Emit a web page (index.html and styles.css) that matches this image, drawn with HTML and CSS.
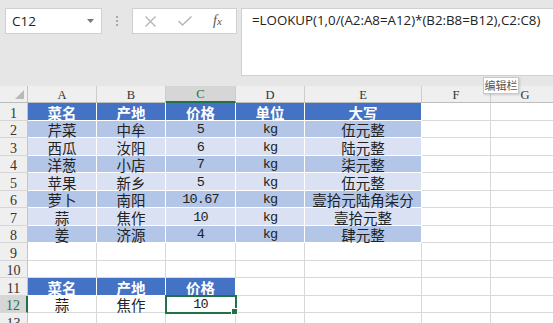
FILE: index.html
```html
<!DOCTYPE html>
<html lang="zh-CN">
<head>
<meta charset="UTF-8" />
<title>LOOKUP</title>
<link rel="stylesheet" href="styles.css">
</head>
<body>
  <div class="toolbar">
    <div class="namebox">
      <span>C12</span>
      <svg class="caret" width="7" height="4" viewBox="0 0 7 4"><path d="M0 0h7L3.5 4z" fill="#777"/></svg>
    </div>
    <div class="grip"><i></i><i></i><i></i></div>
    <div class="fnbox">
      <svg width="11" height="11" viewBox="0 0 11 11"><path d="M0.5 0.5l10 10M10.5 0.5l-10 10" stroke="#b4b4b4" stroke-width="1.3" fill="none"/></svg>
      <svg width="14" height="10" viewBox="0 0 14 10"><path d="M0.5 5l4 4L13.5 0.5" stroke="#b4b4b4" stroke-width="1.4" fill="none"/></svg>
      <span class="fx">f<small>x</small></span>
    </div>
    <div class="formula">=LOOKUP(1,0/(A2:A8=A12)*(B2:B8=B12),C2:C8)</div>
  </div>

  <div class="sheet">
    <div class="row cols">
      <div class="corner"><svg width="9" height="9" viewBox="0 0 9 9"><path d="M9 0v9H0z" fill="#b9b9b9"/></svg></div>
      <div>A</div><div>B</div><div class="on">C</div><div>D</div><div>E</div><div>F</div><div>G</div>
    </div>
    <div class="row">
      <div class="rh">1</div>
      <div class="t h">菜名</div><div class="t h">产地</div><div class="t h">价格</div><div class="t h">单位</div><div class="t h">大写</div><div></div><div></div>
    </div>
    <div class="row">
      <div class="rh">2</div>
      <div class="t d">芹菜</div><div class="t d">中牟</div><div class="t d n">5</div><div class="t d n">kg</div><div class="t d">伍元整</div><div></div><div></div>
    </div>
    <div class="row">
      <div class="rh">3</div>
      <div class="t l">西瓜</div><div class="t l">汝阳</div><div class="t l n">6</div><div class="t l n">kg</div><div class="t l">陆元整</div><div></div><div></div>
    </div>
    <div class="row">
      <div class="rh">4</div>
      <div class="t d">洋葱</div><div class="t d">小店</div><div class="t d n">7</div><div class="t d n">kg</div><div class="t d">柒元整</div><div></div><div></div>
    </div>
    <div class="row">
      <div class="rh">5</div>
      <div class="t l">苹果</div><div class="t l">新乡</div><div class="t l n">5</div><div class="t l n">kg</div><div class="t l">伍元整</div><div></div><div></div>
    </div>
    <div class="row">
      <div class="rh">6</div>
      <div class="t d">萝卜</div><div class="t d">南阳</div><div class="t d n">10.67</div><div class="t d n">kg</div><div class="t d">壹拾元陆角柒分</div><div></div><div></div>
    </div>
    <div class="row">
      <div class="rh">7</div>
      <div class="t l">蒜</div><div class="t l">焦作</div><div class="t l n">10</div><div class="t l n">kg</div><div class="t l">壹拾元整</div><div></div><div></div>
    </div>
    <div class="row">
      <div class="rh">8</div>
      <div class="t d">姜</div><div class="t d">济源</div><div class="t d n">4</div><div class="t d n">kg</div><div class="t d">肆元整</div><div></div><div></div>
    </div>
    <div class="row">
      <div class="rh">9</div>
      <div></div><div></div><div></div><div></div><div></div><div></div><div></div>
    </div>
    <div class="row">
      <div class="rh">10</div>
      <div></div><div></div><div></div><div></div><div></div><div></div><div></div>
    </div>
    <div class="row">
      <div class="rh">11</div>
      <div class="t h">菜名</div><div class="t h">产地</div><div class="t h">价格</div><div></div><div></div><div></div><div></div>
    </div>
    <div class="row">
      <div class="rh on">12</div>
      <div>蒜</div><div>焦作</div><div class="n active">10<b class="handle"></b></div><div></div><div></div><div></div><div></div>
    </div>
    <div class="row">
      <div class="rh">13</div>
      <div></div><div></div><div></div><div></div><div></div><div></div><div></div>
    </div>
  </div>

  <div class="tip">编辑栏</div>
</body>
</html>
```

FILE: styles.css
```css
body {
  margin: 0;
  background: #fff;
  font-family: "Noto Sans CJK SC", sans-serif;
  overflow: hidden;
  width: 553px;
  height: 323px;
}

/* formula bar */
.toolbar {
  height: 86px;
  box-sizing: border-box;
  padding: 8px 0 0 5px;
  background: #e6e6e6;
  display: flex;
  align-items: flex-start;
}

.namebox {
  width: 97px;
  height: 26px;
  box-sizing: border-box;
  background: #fff;
  border: 1px solid #d0d0d0;
  display: flex;
  align-items: center;
  justify-content: space-between;
  padding: 0 7px 0 6px;
  font-family: "Open Sans", sans-serif;
  font-size: 13.5px;
  color: #222;
}

.grip {
  width: 30px;
  height: 26px;
  display: flex;
  flex-direction: column;
  align-items: center;
  justify-content: center;
  gap: 2px;
}

.grip i {
  width: 2px;
  height: 2px;
  background: #a8a8a8;
}

.fnbox {
  width: 105px;
  height: 26px;
  box-sizing: border-box;
  background: #fff;
  border: 1px solid #d0d0d0;
  display: flex;
  align-items: center;
  padding: 0 0 0 12px;
  gap: 22px;
}

.fx {
  font-family: "Liberation Serif", serif;
  font-style: italic;
  font-size: 14px;
  color: #555;
  margin-left: -1px;
}

.fx small {
  font-size: 11px;
}

.formula {
  margin-left: 4px;
  flex: 1;
  height: 68px;
  box-sizing: border-box;
  background: #fff;
  border: 1px solid #d0d0d0;
  border-right: 0;
  padding: 3px 0 0 10px;
  font-family: "Open Sans", sans-serif;
  font-size: 13.3px;
  line-height: 17px;
  color: #222;
  white-space: nowrap;
}

/* sheet */
.sheet {
  overflow: hidden;
}

.row {
  display: flex;
  height: 17px;
}

.row:nth-child(even) {
  height: 18px;
}

.row > div {
  flex: none;
  box-sizing: border-box;
  border-right: 1px solid #d9d9d9;
  border-bottom: 1px solid #d9d9d9;
  display: flex;
  align-items: center;
  justify-content: center;
  padding-top: 1px;
  font-size: 14.5px;
  line-height: 15px;
  color: #222;
  white-space: nowrap;
}

.row > :nth-child(1) { width: 28px; }
.row > :nth-child(2),
.row > :nth-child(3),
.row > :nth-child(5),
.row > :nth-child(7),
.row > :nth-child(8) { width: 69px; }
.row > :nth-child(4) { width: 70px; }
.row > :nth-child(6) { width: 117px; }

.row > .rh {
  background: #efefef;
  border-right-color: #c4c4c4;
  border-bottom-color: #d6d6d6;
  padding-top: 3px;
  font-family: "Liberation Serif", serif;
  font-size: 14px;
  color: #333;
}

.row > .rh.on {
  background: #d6d6d6;
  color: #217346;
  border-right: 2px solid #217346;
}

.cols > div {
  background: #efefef;
  border-right-color: #cdcdcd;
  border-bottom-color: #bdbdbd;
  padding-top: 2px;
  font-family: "Liberation Serif", serif;
  font-size: 12.5px;
  color: #333;
}

.cols > .corner {
  justify-content: flex-end;
  align-items: flex-end;
  padding: 0 3px 3px 0;
  border-right-color: #c4c4c4;
}

.cols > .on {
  background: #d6d6d6;
  color: #217346;
  border-bottom: 2px solid #217346;
}

/* table cells */
.row > .t {
  border-color: #fff;
}

.row > .h {
  background: #4472c4;
  color: #fff;
  font-weight: bold;
}

.row > .d { background: #b4c6e7; }
.row > .l { background: #d9e1f2; }

.row > .n {
  font-family: "Liberation Mono", monospace;
  font-size: 13.5px;
  letter-spacing: -0.8px;
}

.row > .active {
  position: relative;
  z-index: 1;
  outline: 2px solid #217346;
  outline-offset: -1px;
}

.handle {
  position: absolute;
  right: -3px;
  bottom: -3px;
  width: 5px;
  height: 5px;
  background: #217346;
  border: 1px solid #fff;
}

.tip {
  position: absolute;
  left: 483px;
  top: 77px;
  width: 36px;
  height: 17px;
  box-sizing: border-box;
  background: #fff;
  border: 1px solid #c8c8c8;
  box-shadow: 1px 1px 2px rgba(0,0,0,0.15);
  font-size: 11px;
  line-height: 15px;
  color: #555;
  text-align: center;
}
```
